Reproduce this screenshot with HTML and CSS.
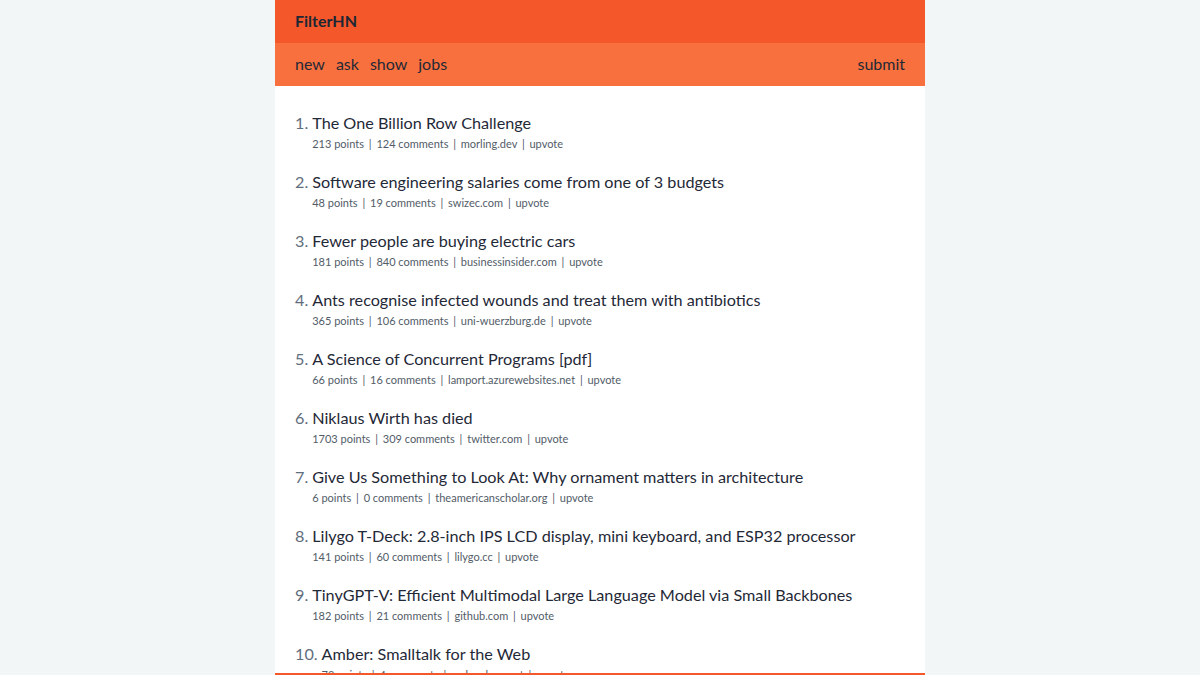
FILE: index.html
```html
<!DOCTYPE html>
<html>
<head>
    <title>FilterHN</title>
    <link rel="stylesheet" href="styles.css">
</head>
<body>
    <div class="page">
        <header class="top">
            <a class="logo" href="#">FilterHN</a>
        </header>
        <nav class="nav">
            <div class="nav-links">
                <a href="#">new</a>
                <a href="#">ask</a>
                <a href="#">show</a>
                <a href="#">jobs</a>
            </div>
            <a href="#">submit</a>
        </nav>
        <ol class="stories">
            <li class="story">
                <span class="rank">1.</span>
                <div class="story-body">
                    <a class="title" href="#">The One Billion Row Challenge</a>
                    <div class="meta">213 points <span class="sep">|</span> 124 comments <span class="sep">|</span> morling.dev <span class="sep">|</span> upvote</div>
                </div>
            </li>
            <li class="story">
                <span class="rank">2.</span>
                <div class="story-body">
                    <a class="title" href="#">Software engineering salaries come from one of 3 budgets</a>
                    <div class="meta">48 points <span class="sep">|</span> 19 comments <span class="sep">|</span> swizec.com <span class="sep">|</span> upvote</div>
                </div>
            </li>
            <li class="story">
                <span class="rank">3.</span>
                <div class="story-body">
                    <a class="title" href="#">Fewer people are buying electric cars</a>
                    <div class="meta">181 points <span class="sep">|</span> 840 comments <span class="sep">|</span> businessinsider.com <span class="sep">|</span> upvote</div>
                </div>
            </li>
            <li class="story">
                <span class="rank">4.</span>
                <div class="story-body">
                    <a class="title" href="#">Ants recognise infected wounds and treat them with antibiotics</a>
                    <div class="meta">365 points <span class="sep">|</span> 106 comments <span class="sep">|</span> uni-wuerzburg.de <span class="sep">|</span> upvote</div>
                </div>
            </li>
            <li class="story">
                <span class="rank">5.</span>
                <div class="story-body">
                    <a class="title" href="#">A Science of Concurrent Programs [pdf]</a>
                    <div class="meta">66 points <span class="sep">|</span> 16 comments <span class="sep">|</span> lamport.azurewebsites.net <span class="sep">|</span> upvote</div>
                </div>
            </li>
            <li class="story">
                <span class="rank">6.</span>
                <div class="story-body">
                    <a class="title" href="#">Niklaus Wirth has died</a>
                    <div class="meta">1703 points <span class="sep">|</span> 309 comments <span class="sep">|</span> twitter.com <span class="sep">|</span> upvote</div>
                </div>
            </li>
            <li class="story">
                <span class="rank">7.</span>
                <div class="story-body">
                    <a class="title" href="#">Give Us Something to Look At: Why ornament matters in architecture</a>
                    <div class="meta">6 points <span class="sep">|</span> 0 comments <span class="sep">|</span> theamericanscholar.org <span class="sep">|</span> upvote</div>
                </div>
            </li>
            <li class="story">
                <span class="rank">8.</span>
                <div class="story-body">
                    <a class="title" href="#">Lilygo T-Deck: 2.8-inch IPS LCD display, mini keyboard, and ESP32 processor</a>
                    <div class="meta">141 points <span class="sep">|</span> 60 comments <span class="sep">|</span> lilygo.cc <span class="sep">|</span> upvote</div>
                </div>
            </li>
            <li class="story">
                <span class="rank">9.</span>
                <div class="story-body">
                    <a class="title" href="#">TinyGPT-V: Efficient Multimodal Large Language Model via Small Backbones</a>
                    <div class="meta">182 points <span class="sep">|</span> 21 comments <span class="sep">|</span> github.com <span class="sep">|</span> upvote</div>
                </div>
            </li>
            <li class="story">
                <span class="rank">10.</span>
                <div class="story-body">
                    <a class="title" href="#">Amber: Smalltalk for the Web</a>
                    <div class="meta">78 points <span class="sep">|</span> 4 comments <span class="sep">|</span> amber-lang.net <span class="sep">|</span> upvote</div>
                </div>
            </li>
        </ol>
    </div>
    <footer class="bottom"></footer>
</body>
</html>
```

FILE: styles.css
```css
body {
    margin: 0;
    background-color: #f3f6f7;
    font-family: Lato, "Open Sans", sans-serif;
    color: #1f2937;
}

a {
    color: inherit;
    text-decoration: none;
}

.page {
    width: 650px;
    margin: 0 auto;
    background-color: #fff;
    min-height: 100vh;
}

.top {
    height: 43px;
    box-sizing: border-box;
    padding: 0 20px 2px;
    background-color: #f3572a;
    display: flex;
    align-items: center;
}

.logo {
    font-size: 16px;
    font-weight: 700;
    color: #1e2733;
}

.nav {
    height: 43px;
    box-sizing: border-box;
    padding: 0 20px 2px;
    background-color: #f8703d;
    display: flex;
    align-items: center;
    justify-content: space-between;
    font-size: 16px;
}

.nav-links {
    display: flex;
    gap: 11px;
}

.stories {
    list-style: none;
    margin: 0;
    padding: 26px 20px 0;
}

.story {
    display: flex;
    gap: 4px;
    height: 59px;
}

.rank {
    font-size: 16.2px;
    line-height: 22px;
    color: #5f6e7d;
}

.title {
    display: block;
    font-size: 16.2px;
    line-height: 22px;
}

.meta {
    margin-top: 1px;
    font-size: 11px;
    line-height: 18px;
    color: #525c68;
}

.sep {
    margin: 0 2px;
}

.bottom {
    position: fixed;
    left: 275px;
    right: 275px;
    bottom: 0;
    height: 2px;
    background-color: #f3572a;
}
```
